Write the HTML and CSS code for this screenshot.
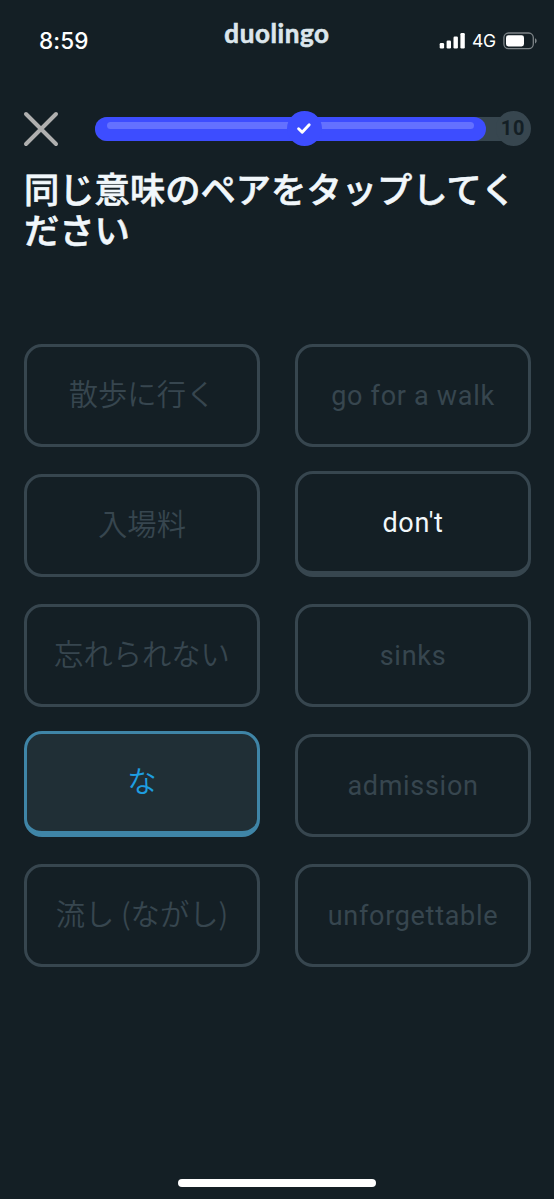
FILE: index.html
```html
<!DOCTYPE html>
<html lang="ja">
<head>
<meta charset="utf-8">
<title>duolingo</title>
<link rel="stylesheet" href="styles.css">
</head>
<body>
<div class="screen">
  <header class="status">
    <span class="clock">8:59</span>
    <span class="brand">duolingo</span>
    <div class="signals">
      <svg width="27" height="17" viewBox="0 0 27 17" fill="#fff">
        <rect x="0.7" y="11" width="4.4" height="5.4" rx="1.2"/>
        <rect x="7.6" y="8.5" width="4.4" height="7.9" rx="1.2"/>
        <rect x="14.5" y="4.6" width="4.4" height="11.8" rx="1.2"/>
        <rect x="21.4" y="1" width="4.4" height="15.4" rx="1.2"/>
      </svg>
      <span class="network">4G</span>
      <svg class="battery" width="35" height="18" viewBox="0 0 35 18">
        <rect x="0.9" y="1" width="29.4" height="15.6" rx="4.6" fill="none" stroke="#7d8488" stroke-width="1.3"/>
        <rect x="3" y="3.2" width="18" height="11.2" rx="2.4" fill="#fff"/>
        <path d="M32 6.2C34.2 7.2 34.2 10.4 32 11.4Z" fill="#7d8488"/>
      </svg>
    </div>
  </header>
  <div class="lesson-bar">
    <svg class="close" width="36" height="36" viewBox="0 0 36 36" fill="none" stroke="#afafaf" stroke-width="4" stroke-linecap="round">
      <path d="M3 3L33 33M33 3L3 33"/>
    </svg>
    <div class="track">
      <div class="fill"><div class="shine"></div></div>
      <div class="badge done">
        <svg width="16" height="14" viewBox="0 0 16 14" fill="none" stroke="#fff" stroke-width="2.9" stroke-linecap="round" stroke-linejoin="round"><path d="M2.6 7.8L6.2 11.3L13.2 3.7"/></svg>
      </div>
      <div class="badge goal">10</div>
    </div>
  </div>
  <h1 class="title">同じ意味のペアをタップしてください</h1>
  <main class="pairs">
    <div class="card ja">散歩に行く</div>
    <div class="card en">go for a walk</div>
    <div class="card ja">入場料</div>
    <div class="card en raised open">don't</div>
    <div class="card ja">忘れられない</div>
    <div class="card en">sinks</div>
    <div class="card ja raised selected">な</div>
    <div class="card en">admission</div>
    <div class="card ja">流し (ながし)</div>
    <div class="card en">unforgettable</div>
  </main>
  <div class="home"></div>
</div>
</body>
</html>
```
FILE: styles.css
```css
* { box-sizing: border-box; }
body { margin: 0; background: #141f25; }
.screen {
  width: 554px;
  height: 1199px;
  display: flex;
  flex-direction: column;
  background: #141f25;
  font-family: Roboto, "Noto Sans CJK JP", sans-serif;
}
.status {
  height: 80px;
  display: grid;
  grid-template-columns: 180px 194px 180px;
  align-items: start;
  color: #fff;
}
.clock {
  padding: 27px 0 0 39px;
  font: 500 22.5px/28px Inter, sans-serif;
  letter-spacing: 0.1px;
}
.brand {
  padding-top: 17px;
  text-align: center;
  font: 700 26px/32px Lato, sans-serif;
  letter-spacing: 0.6px;
  -webkit-text-stroke: 0.6px #dce6ec;
  color: #dce6ec;
}
.signals {
  display: flex;
  align-items: center;
  padding: 31px 0 0 65px;
}
.network {
  width: 25px;
  margin: 0 6px;
  font: 400 17.5px/19px Inter, sans-serif;
  letter-spacing: -0.3px;
}
.lesson-bar {
  display: flex;
  align-items: center;
  height: 97px;
  padding-left: 23px;
  gap: 36px;
}
.close { flex: none; }
.track {
  position: relative;
  width: 431px;
  height: 24px;
  border-radius: 12px;
  background: #37464f;
}
.fill {
  width: 391px;
  height: 24px;
  padding: 5px 12px;
  border-radius: 12px;
  background: #3d4dff;
}
.shine { height: 7px; border-radius: 4px; background: #6471ff; }
.badge {
  position: absolute;
  top: -6px;
  width: 35px;
  height: 35px;
  border-radius: 50%;
  display: flex;
  align-items: center;
  justify-content: center;
}
.done {
  left: 191.5px;
  background: #3d4dff;
}
.goal {
  left: 400.5px;
  background: #37464f;
  color: #141f25;
  font: 700 20px/35px Roboto, sans-serif;
  letter-spacing: 0.8px;
}
.title {
  height: 167px;
  width: 530px;
  margin: -10px 0 0;
  padding-left: 24px;
  font: 500 35.3px/41px "Noto Sans CJK JP", sans-serif;
  -webkit-text-stroke: 0.6px #f1f7fb;
  color: #f1f7fb;
}
.pairs {
  display: grid;
  grid-template-columns: 236px 236px;
  grid-auto-rows: 103px;
  gap: 27px 35px;
  margin-top: 10px;
  padding-left: 24px;
  align-items: end;
}
.card {
  height: 103px;
  display: flex;
  align-items: center;
  justify-content: center;
  border: 3px solid #37464f;
  border-radius: 18px;
  color: #37464f;
  white-space: nowrap;
}
.raised { height: 106px; border-bottom-width: 6px; }
.ja { padding-bottom: 7px; font: 350 29.3px/40px "Noto Sans CJK JP", sans-serif; }
.en { padding-top: 1px; font: 400 27px/36px Roboto, sans-serif; letter-spacing: 0.7px; }
.open { color: #f1f7fb; }
.selected { border-color: #3f85a7; background: #202f36; color: #1e9ee0; }
.home {
  width: 198px;
  height: 8px;
  border-radius: 4px;
  background: #fff;
  margin: auto auto 12px 178px;
}
```
